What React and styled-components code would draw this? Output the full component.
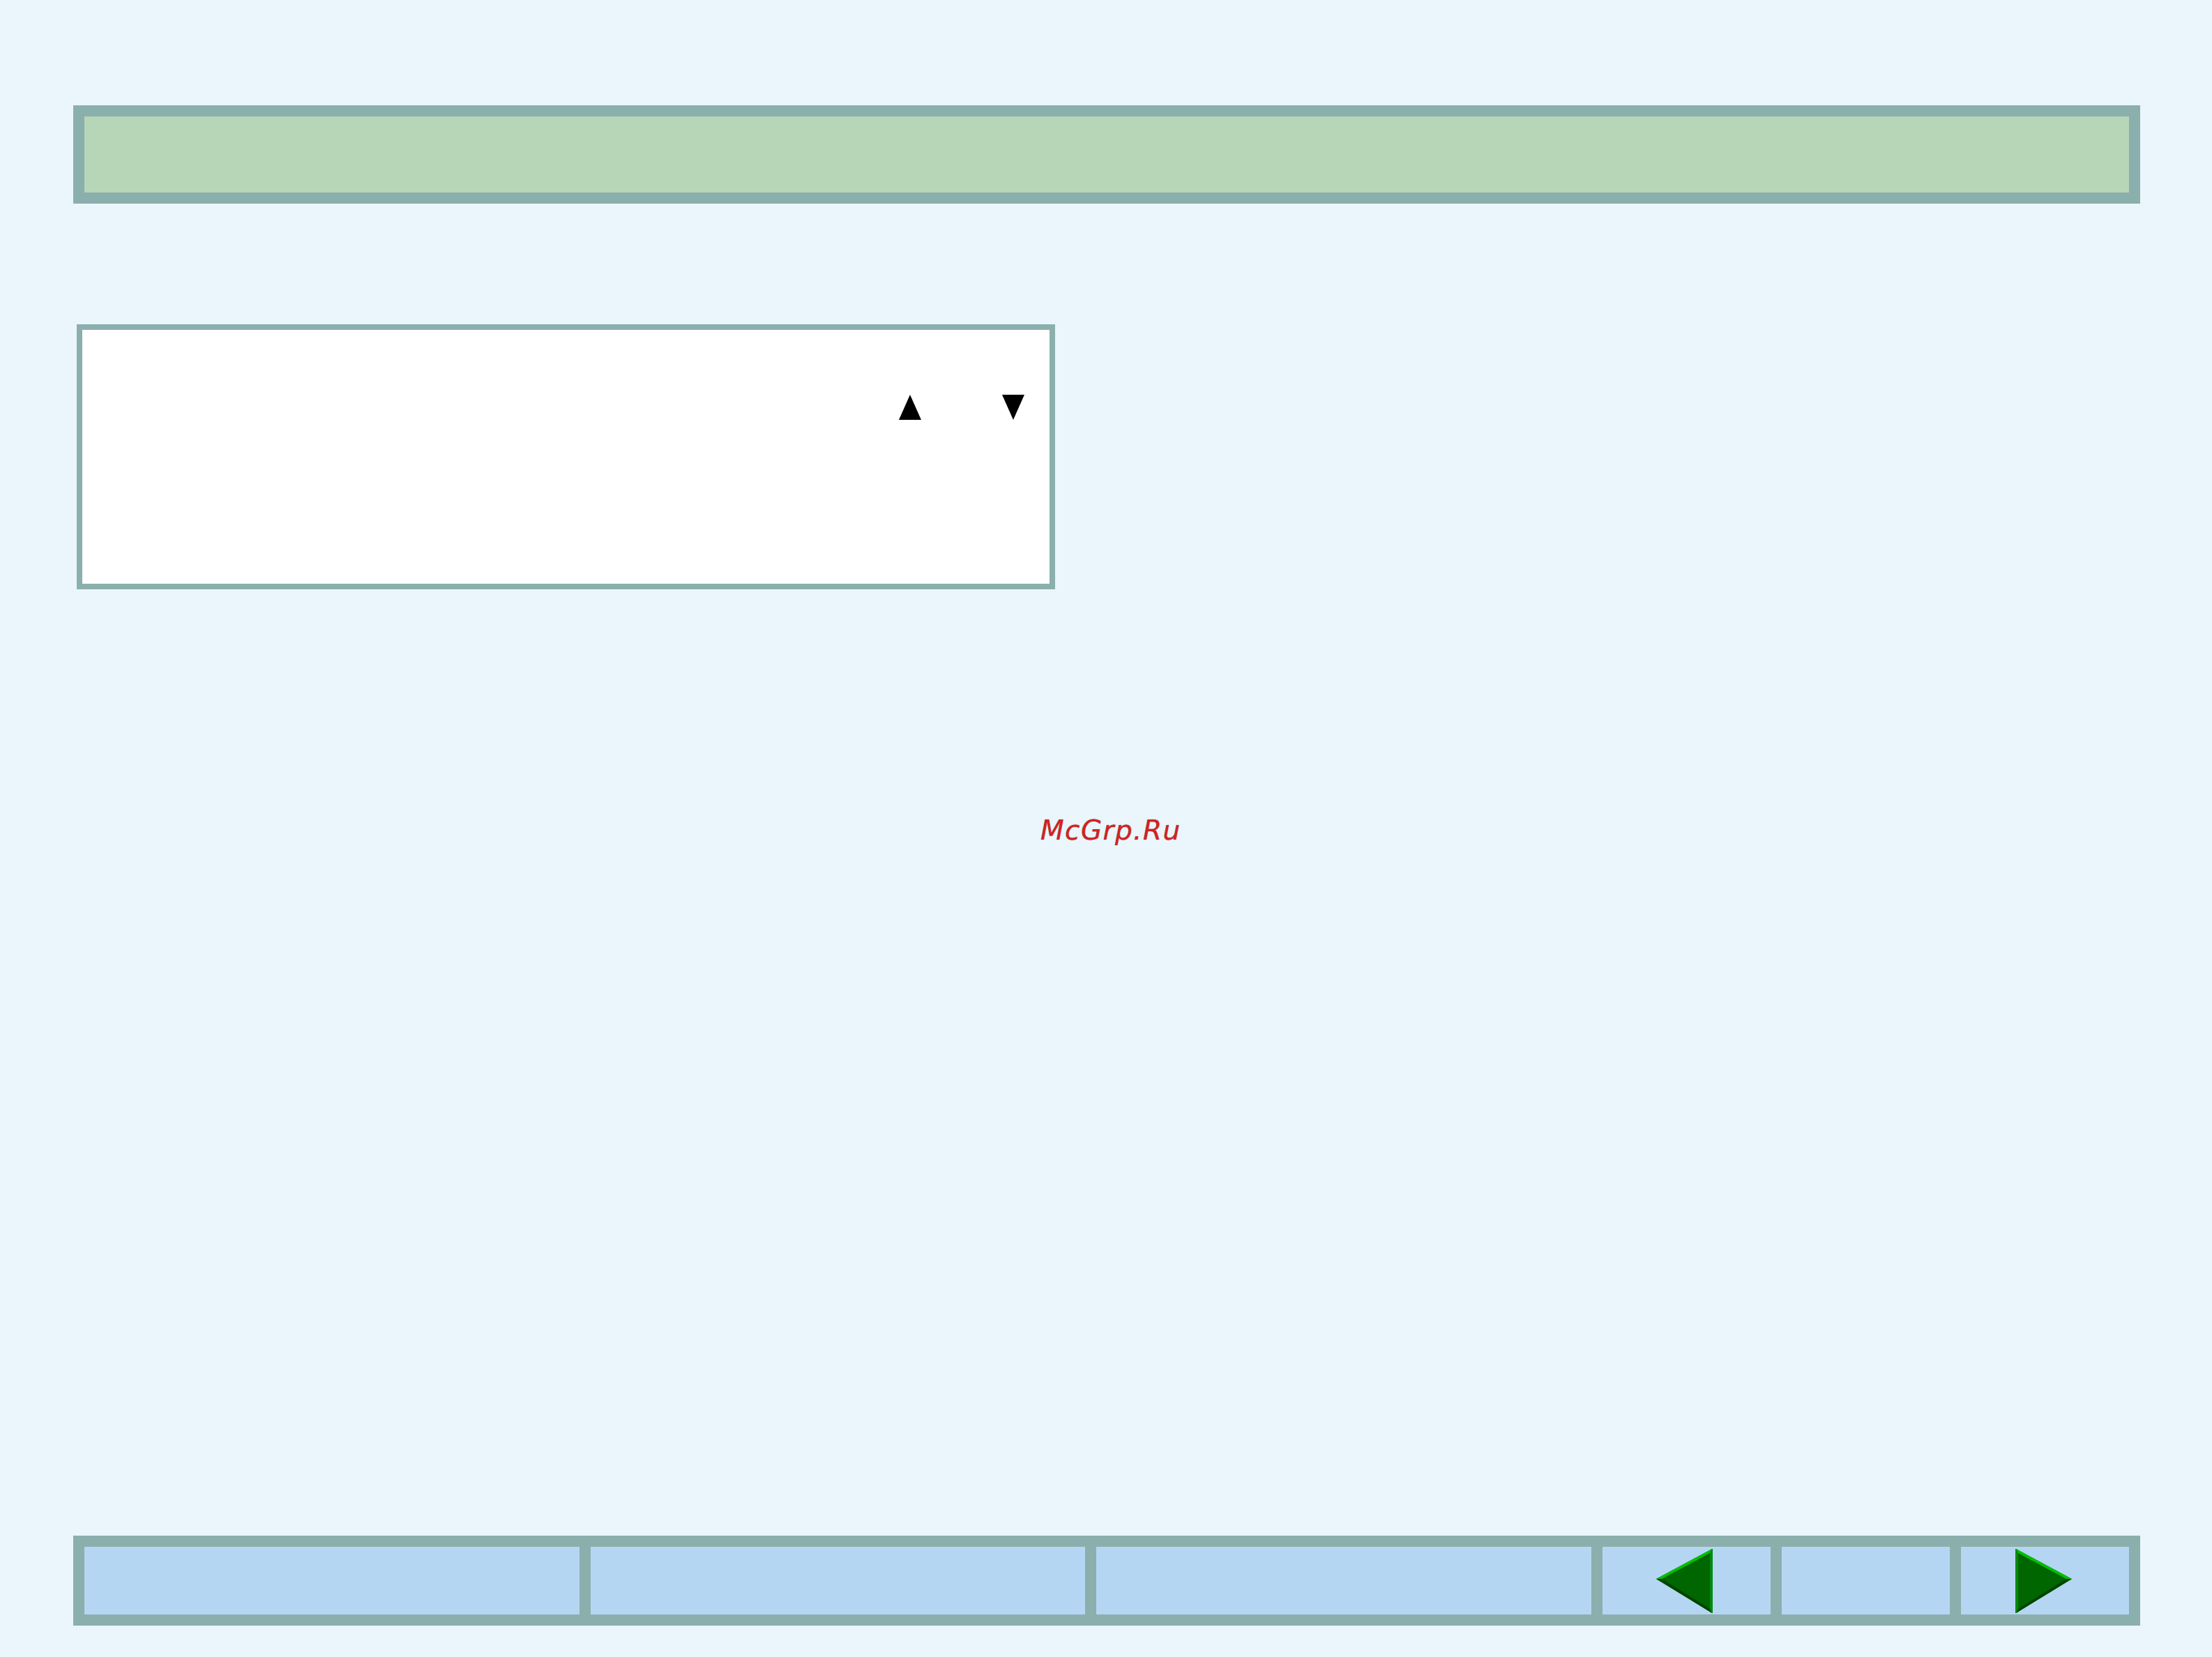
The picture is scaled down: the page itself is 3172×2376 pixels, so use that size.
import React from "react";
import styled, { createGlobalStyle } from "styled-components";

const Global = createGlobalStyle`
  html, body { margin: 0; padding: 0; background: #eaf6fc; }
  #root { width: 3172px; height: 2376px; }
`;

const Page = styled.div`
  box-sizing: border-box;
  width: 3172px;
  height: 2376px;
  padding: 151px 103px 45px 105px;
  display: flex;
  flex-direction: column;
  background: #eaf6fc;
`;

const Header = styled.header`
  box-sizing: border-box;
  height: 141px;
  flex: none;
  background: #b7d6b7;
  border: 16px solid #8bafac;
`;

const Panel = styled.section`
  box-sizing: border-box;
  flex: none;
  width: 1403px;
  height: 380px;
  margin: 173px 0 0 5px;
  background: #fff;
  border: 8px solid #8bafac;
  display: flex;
  justify-content: flex-end;
  align-items: flex-start;
  gap: 116px;
  padding: 93px 36px 0 0;
`;

const Watermark = styled.div`
  flex: 1;
  padding-top: 324px;
  padding-left: 1387px;
  font: italic 39px/44px "DejaVu Sans", sans-serif;
  letter-spacing: 1.4px;
  color: #d42222;
  text-shadow: 0 0 1px rgba(40, 0, 0, 0.55);
`;

const Footer = styled.footer`
  box-sizing: border-box;
  flex: none;
  height: 129px;
  padding: 16px;
  display: grid;
  grid-template-columns: 710px 709px 710px 241px 241px 241px;
  column-gap: 16px;
  background: #8bafac;
`;

const Cell = styled.div`
  background: #b5d6f3;
  display: flex;
  align-items: center;
  padding: ${(p) => p.$padding || "0"};
`;

const Glyph = styled.svg`
  display: block;
  flex: none;
`;

const Arrow = ({ dir }) => (
  <Glyph width="32" height="36" viewBox="0 0 32 36">
    <polygon points={dir === "up" ? "16,0 32,36 0,36" : "0,0 32,0 16,36"} fill="#000" />
  </Glyph>
);

const NavLeft = () => (
  <Glyph width="81" height="92" viewBox="0 0 81 92">
    <polygon points="0,43 80,0 80,92" fill="#006600" />
    <polygon points="0,43 80,0 77,6 8,43" fill="#00c000" />
    <polygon points="0,43 8,43 77,86 80,92" fill="#004400" />
    <polygon points="77,6 80,0 81,0 81,92 80,92 77,86" fill="#008a10" />
  </Glyph>
);

const NavRight = () => (
  <Glyph width="81" height="92" viewBox="0 0 81 92">
    <polygon points="81,43 1,0 1,92" fill="#006600" />
    <polygon points="81,43 1,0 4,6 73,43" fill="#00c000" />
    <polygon points="81,43 73,43 4,86 1,92" fill="#004400" />
    <polygon points="4,6 1,0 0,0 0,92 1,92 4,86" fill="#008a10" />
  </Glyph>
);

export default function App() {
  return (
    <>
      <Global />
      <Page>
        <Header />
        <Panel>
          <Arrow dir="up" />
          <Arrow dir="down" />
        </Panel>
        <Watermark>McGrp.Ru</Watermark>
        <Footer>
          <Cell />
          <Cell />
          <Cell />
          <Cell $padding="0 0 0 77px">
            <NavLeft />
          </Cell>
          <Cell />
          <Cell $padding="0 0 0 78px">
            <NavRight />
          </Cell>
        </Footer>
      </Page>
    </>
  );
}
